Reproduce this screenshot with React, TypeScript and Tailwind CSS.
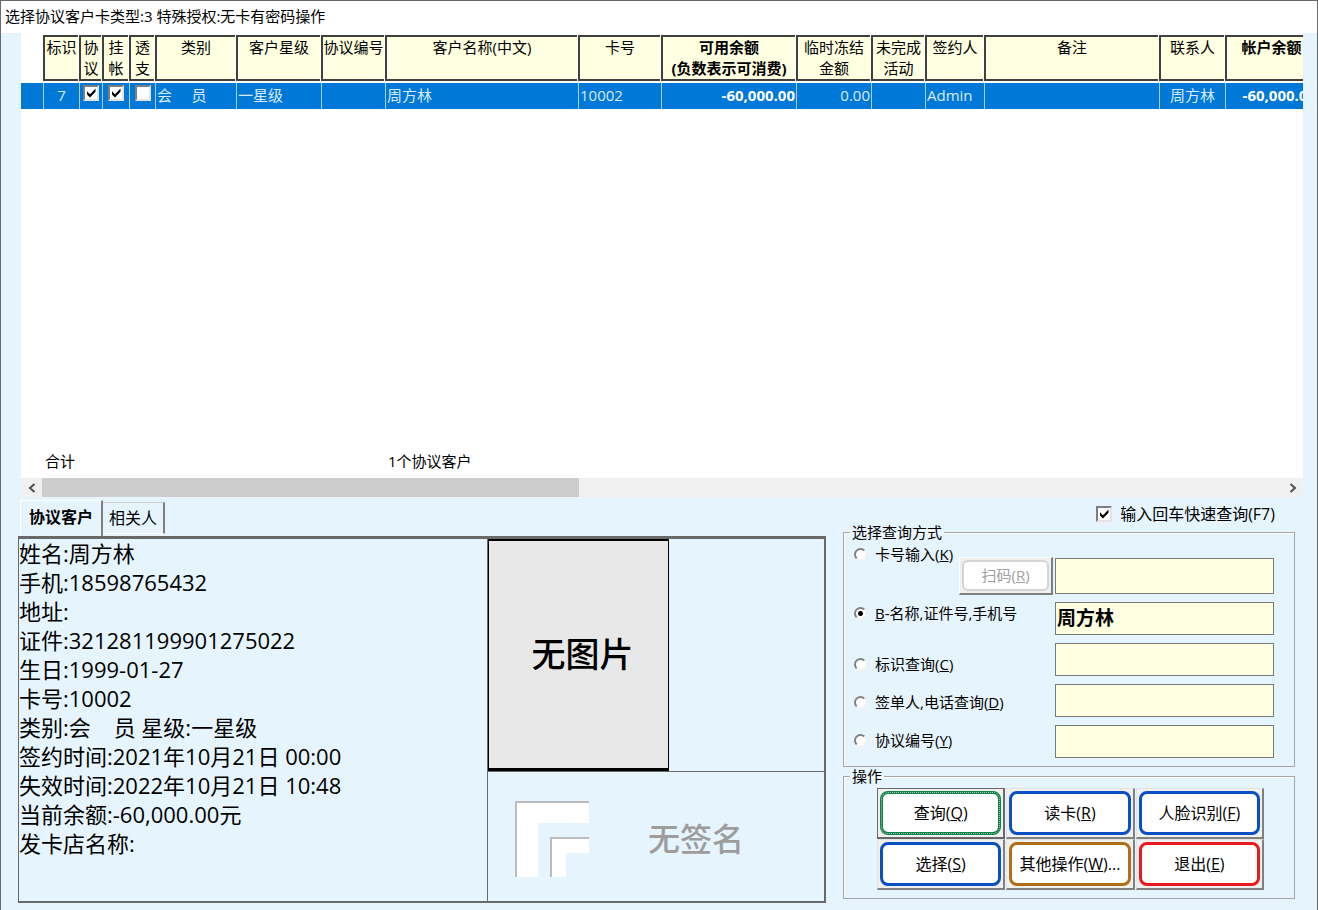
import { useState } from "react";
import type { ReactNode } from "react";
import clsx from "clsx";

interface Column {
  title: string[];
  width: number;
  bold?: boolean;
}

const COLUMNS: Column[] = [
  { title: ["标识"], width: 36 },
  { title: ["协", "议"], width: 23 },
  { title: ["挂", "帐"], width: 27 },
  { title: ["透", "支"], width: 26 },
  { title: ["类别"], width: 81 },
  { title: ["客户星级"], width: 85 },
  { title: ["协议编号"], width: 64 },
  { title: ["客户名称(中文)"], width: 193 },
  { title: ["卡号"], width: 83 },
  { title: ["可用余额", "(负数表示可消费)"], width: 135, bold: true },
  { title: ["临时冻结", "金额"], width: 75 },
  { title: ["未完成", "活动"], width: 54 },
  { title: ["签约人"], width: 59 },
  { title: ["备注"], width: 175 },
  { title: ["联系人"], width: 66 },
  { title: ["帐户余额"], width: 92, bold: true },
];

const TABLE_WIDTH = COLUMNS.reduce((sum, c) => sum + c.width, 22);

const DETAILS = [
  "姓名:周方林",
  "手机:18598765432",
  "地址:",
  "证件:321281199901275022",
  "生日:1999-01-27",
  "卡号:10002",
  "类别:会    员 星级:一星级",
  "签约时间:2021年10月21日 00:00",
  "失效时间:2022年10月21日 10:48",
  "当前余额:-60,000.00元",
  "发卡店名称:",
];

interface CheckProps {
  id?: string;
  label?: string;
  defaultChecked?: boolean;
}

function Check({ id, label, defaultChecked }: CheckProps) {
  return (
    <span className="relative inline-block size-4 shrink-0 align-top">
      <input
        id={id}
        type="checkbox"
        aria-label={label}
        defaultChecked={defaultChecked}
        className="peer block size-4 appearance-none border-2 border-t-[#7d7d7d] border-l-[#7d7d7d] border-r-[#e3e3e3] border-b-[#e3e3e3] bg-white"
      />
      <svg viewBox="0 0 16 16" className="pointer-events-none absolute inset-0 hidden size-4 peer-checked:block">
        <path d="M4 6.2v3.2l3 3 5.5-5.6V3.6L7 9.2z" fill="#000" />
      </svg>
    </span>
  );
}

// Label text with an underlined access key, e.g. 查询(Q)
function Hotkey({ text, k, tail = "" }: { text: string; k: string; tail?: string }) {
  return (
    <span>
      {text}(<u>{k}</u>){tail}
    </span>
  );
}

interface ModeProps {
  id: string;
  value: string;
  mode: string;
  onPick: (id: string) => void;
  className?: string;
  children: ReactNode;
}

function Mode({ id, value, mode, onPick, className, children }: ModeProps) {
  return (
    <label htmlFor={id} className={clsx("flex h-5 items-center gap-2 whitespace-nowrap", className)}>
      <input
        id={id}
        type="radio"
        name="mode"
        checked={mode === value}
        onChange={() => onPick(value)}
        className="size-[13px] appearance-none rounded-full border-2 border-t-[#808080] border-l-[#808080] border-r-[#f4f4f4] border-b-[#f4f4f4] bg-white checked:bg-[radial-gradient(circle,#000_2px,#fff_3px)]"
      />
      {children}
    </label>
  );
}

function ActionButton({ color, focused, children }: { color: string; focused?: boolean; children: ReactNode }) {
  return (
    <button
      type="button"
      className={clsx(
        "h-[51px] border-t border-l border-r-2 border-b-2 bg-[#f0f0f0] p-0.5 text-[16px]",
        focused ? "border-[#696969]" : "border-t-[#e3e3e3] border-l-[#e3e3e3] border-r-[#808080] border-b-[#808080]"
      )}
    >
      <span
        className={clsx(
          "flex h-full items-center justify-center rounded-lg border-[3px] bg-white",
          color,
          focused && "outline-1 -outline-offset-2 outline-white/60 outline-dotted"
        )}
      >
        {children}
      </span>
    </button>
  );
}

function CustomerGrid() {
  const cell = "border-l border-[#a8d0f2] p-0 px-px pb-0.5";
  return (
    <div className="flex min-w-0 flex-1 flex-col bg-white">
      <div className="flex-1 overflow-hidden pt-0.5">
        <table className="table-fixed border-separate border-spacing-0 text-[15px] leading-[21px]" style={{ width: TABLE_WIDTH }}>
          <colgroup>
            <col className="w-[22px]" />
            {COLUMNS.map((c) => (
              <col key={c.title[0]} style={{ width: c.width }} />
            ))}
          </colgroup>
          <thead>
            <tr>
              <td />
              {COLUMNS.map((c) => (
                <th key={c.title[0]} className={clsx("border-r border-b-2 border-white p-0", c.bold ? "font-bold" : "font-normal")}>
                  <div className="flex h-[46px] flex-col items-center border-2 border-r-0 border-[#404040] bg-[#ffffe1] whitespace-nowrap">
                    {c.title.map((t) => (
                      <span key={t}>{t}</span>
                    ))}
                  </div>
                </th>
              ))}
            </tr>
          </thead>
          <tbody>
            <tr className="h-[26px] bg-[#0078d7] whitespace-nowrap text-[#d9ebfa]">
              <td />
              <td className={clsx(cell, "text-center")}>7</td>
              <td className={clsx(cell, "text-center")}><Check label="协议" defaultChecked /></td>
              <td className={clsx(cell, "text-center")}><Check label="挂帐" defaultChecked /></td>
              <td className={clsx(cell, "text-center")}><Check label="透支" /></td>
              <td className={clsx(cell, "whitespace-pre")}>{"会     员"}</td>
              <td className={cell}>一星级</td>
              <td className={cell} />
              <td className={cell}>周方林</td>
              <td className={cell}>10002</td>
              <td className={clsx(cell, "text-right font-bold text-white")}>-60,000.00</td>
              <td className={clsx(cell, "text-right")}>0.00</td>
              <td className={cell} />
              <td className={cell}>Admin</td>
              <td className={cell} />
              <td className={clsx(cell, "text-center")}>周方林</td>
              <td className={clsx(cell, "text-right font-bold text-white")}>-60,000.00</td>
            </tr>
          </tbody>
        </table>
      </div>

      <div className="flex h-[34px] items-center pl-6 text-[15px]">
        <span className="w-[343px]">合计</span>
        <span>1个协议客户</span>
      </div>

      {/* Horizontal scrollbar */}
      <div className="flex h-[19px] items-center bg-[#f0f0f0]">
        <button type="button" aria-label="向左滚动" className="flex w-[21px] justify-center">
          <svg viewBox="0 0 10 10" className="size-2.5"><path d="M7.5 1 3 5l4.5 4" fill="none" stroke="#505050" strokeWidth="2" /></svg>
        </button>
        <div className="flex h-full flex-1">
          <div className="h-full w-[43.3%] bg-[#cdcdcd]" />
        </div>
        <button type="button" aria-label="向右滚动" className="flex w-[21px] justify-center">
          <svg viewBox="0 0 10 10" className="size-2.5"><path d="M2.5 1 7 5 2.5 9" fill="none" stroke="#505050" strokeWidth="2" /></svg>
        </button>
      </div>
    </div>
  );
}

function CustomerDetails() {
  return (
    <div className="flex min-w-0 flex-1 flex-col">
      <div role="tablist" className="flex h-9 items-end pl-0.5">
        <button role="tab" type="button" aria-selected="true" className="h-9 w-[83px] border-t border-r-2 border-l border-t-white border-r-[#808080] border-l-white pb-1 text-[16px] font-bold">
          协议客户
        </button>
        <button role="tab" type="button" aria-selected="false" className="mb-0.5 h-8 w-[62px] border-t border-r-2 border-b border-t-[#d0d0d0] border-r-[#808080] border-b-white text-[16px]">
          相关人
        </button>
      </div>

      <div className="flex flex-1 border-t-[3px] border-r-2 border-b-2 border-l border-[#696969]">
        <div className="min-w-0 flex-1 text-[22px] leading-[29px] whitespace-pre">
          {DETAILS.map((line) => (
            <p key={line}>{line}</p>
          ))}
        </div>

        <div className="flex w-[337px] flex-col border-l border-[#696969]">
          <div className="border-b border-[#696969]">
            <div className="flex h-[232px] w-[181px] items-center justify-center border-x border-t-2 border-b-[3px] border-black bg-[#e8e8e8] pl-2 text-[34px] font-medium">
              无图片
            </div>
          </div>
          <div className="flex flex-1 items-center pt-1 pl-[27px]">
            <svg viewBox="0 0 74 76" className="h-[76px] w-[74px]">
              <path d="M0 0H74V22H23V76H0z" fill="#fff" />
              <path d="M35 36H74V52H51V76H35z" fill="#fff" />
              <path d="M1 76V1H74M36 76V37H74" fill="none" stroke="#bcbcbc" strokeWidth="2" />
            </svg>
            <span className="ml-[59px] text-[32px] font-medium text-[#9d9d9d]">无签名</span>
          </div>
        </div>
      </div>
    </div>
  );
}

function QueryPanel() {
  const [mode, setMode] = useState("name");
  const field = "w-full border border-[#7a7a7a] bg-[#ffffe1] px-px text-[19px] font-bold outline-none";

  return (
    <form className="flex w-[452px] shrink-0 flex-col pb-1 text-[15px]" onSubmit={(e) => e.preventDefault()}>
      <label htmlFor="quick" className="mt-1 mr-5 flex h-5 items-center justify-end gap-2 text-[16px]">
        <Check id="quick" defaultChecked />
        输入回车快速查询(F7)
      </label>

      <fieldset className="border border-[#a6a6a6] px-2.5 pt-1 pb-2 shadow-[inset_1px_1px_0_#fff]">
        <legend className="-ml-1 h-4 px-0.5 leading-4">选择查询方式</legend>
        <div className="flex gap-0.5">
          <div className="flex w-[199px] flex-col">
            <div className="flex h-[51px] justify-between">
              <Mode id="m-card" value="card" mode={mode} onPick={setMode}>
                <Hotkey text="卡号输入" k="K" />
              </Mode>
              <button
                type="button"
                disabled
                className="-ml-1 h-[38px] w-[94px] self-end border-t border-l border-r-2 border-b-2 border-t-white border-l-white border-r-[#808080] border-b-[#808080] bg-[#f0f0f0] p-0.5 text-[#a0a0a0]"
              >
                <span className="flex h-full items-center justify-center rounded-md border-2 border-[#d4d4d4] bg-white">
                  <Hotkey text="扫码" k="R" />
                </span>
              </button>
            </div>
            <Mode id="m-name" value="name" mode={mode} onPick={setMode} className="mt-2">
              <span><u>B</u>-名称,证件号,手机号</span>
            </Mode>
            <Mode id="m-mark" value="mark" mode={mode} onPick={setMode} className="mt-[31px]">
              <Hotkey text="标识查询" k="C" />
            </Mode>
            <Mode id="m-sign" value="sign" mode={mode} onPick={setMode} className="mt-[18px]">
              <Hotkey text="签单人,电话查询" k="D" />
            </Mode>
            <Mode id="m-code" value="code" mode={mode} onPick={setMode} className="mt-[18px]">
              <Hotkey text="协议编号" k="Y" />
            </Mode>
          </div>
          <div className="flex w-[219px] flex-col gap-2 pt-3.5">
            <input aria-label="卡号输入" className={clsx(field, "h-9")} />
            <input aria-label="名称,证件号,手机号" defaultValue="周方林" className={clsx(field, "h-[33px] pb-1")} />
            <input aria-label="标识查询" className={clsx(field, "h-[33px]")} />
            <input aria-label="签单人,电话查询" className={clsx(field, "h-[33px]")} />
            <input aria-label="协议编号" className={clsx(field, "h-[33px]")} />
          </div>
        </div>
      </fieldset>

      <fieldset className="mt-px border border-[#a6a6a6] px-2.5 pt-1 pb-2 shadow-[inset_1px_1px_0_#fff]">
        <legend className="-ml-1 h-4 px-0.5 leading-4">操作</legend>
        <div className="mr-5 ml-[23px] grid grid-cols-3 gap-x-px">
          <ActionButton color="border-[#12804a]" focused><Hotkey text="查询" k="Q" /></ActionButton>
          <ActionButton color="border-[#0a4fc4]"><Hotkey text="读卡" k="R" /></ActionButton>
          <ActionButton color="border-[#0a4fc4]"><Hotkey text="人脸识别" k="F" /></ActionButton>
          <ActionButton color="border-[#0a4fc4]"><Hotkey text="选择" k="S" /></ActionButton>
          <ActionButton color="border-[#b06f17]"><Hotkey text="其他操作" k="W" tail="..." /></ActionButton>
          <ActionButton color="border-[#e8191f]"><Hotkey text="退出" k="E" /></ActionButton>
        </div>
      </fieldset>
    </form>
  );
}

export default function App() {
  return (
    <div className="flex min-h-screen flex-col border border-b-0 border-[#696969] bg-[#e6f4fd] font-['Open_Sans','Noto_Sans_CJK_SC',sans-serif] text-black">
      <header className="flex h-8 items-center bg-white pb-0.5 pl-1">
        <h1 className="text-[15px]">选择协议客户卡类型:3 特殊授权:无卡有密码操作</h1>
      </header>
      <main className="flex flex-1 flex-col">
        <div className="flex flex-1 pr-3.5 pl-5">
          <CustomerGrid />
        </div>
        <div className="flex gap-[17px] pt-[3px] pr-[22px] pb-[7px] pl-[17px]">
          <CustomerDetails />
          <QueryPanel />
        </div>
      </main>
    </div>
  );
}
